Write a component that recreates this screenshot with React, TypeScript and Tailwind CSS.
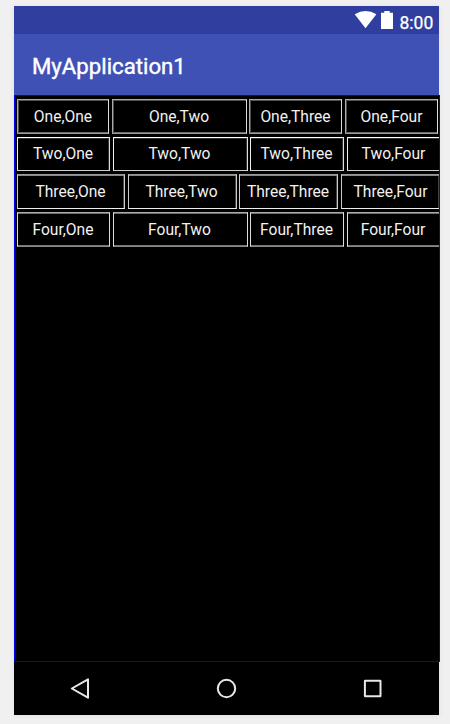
const rows = [
  {
    frame: 'h-[35px]',
    line: 'border-t-[#aaa] border-l-[#aaa] border-r-[#ddd] border-b-[#999] shadow-[inset_1px_1px_0_#505050,inset_0_-1px_0_#707070]',
    cells: [
      ['One,One', 'w-[92px] mr-[3px]'],
      ['One,Two', 'w-[135px] mr-[2px] pr-[1px]'],
      ['One,Three', 'w-[93px] mr-[3px]'],
      ['One,Four', 'w-[93px]'],
    ],
  },
  {
    frame: 'h-[34px] mt-[3px]',
    line: 'border-t-[#fff] border-l-[#eee] border-r-[#ddd] border-b-[#ccc] shadow-[inset_0_1px_0_#333,inset_-1px_0_0_#333]',
    cells: [
      ['Two,One', 'w-[93px] mr-[3px] pr-[1px]'],
      ['Two,Two', 'w-[135px] mr-[2px] pr-[2px]'],
      ['Two,Three', 'w-[94px] mr-[3px] pr-[1px]'],
      ['Two,Four', 'w-[94px] pr-[1px]'],
    ],
  },
  {
    frame: 'h-[35px] mt-[3px]',
    line: 'border-t-[#999] border-l-[#ccc] border-r-[#ccc] border-b-[#eee] shadow-[inset_0_1px_0_#888,inset_-1px_0_0_#444]',
    cells: [
      ['Three,One', 'w-[108px] mr-[3px] pr-[1px]'],
      ['Three,Two', 'w-[109px] mr-[2px] pr-[2px]'],
      ['Three,Three', 'w-[99px] mr-[3px] pr-[1px]'],
      ['Three,Four', 'w-[99px]'],
    ],
  },
  {
    frame: 'h-[35px] mt-[3px]',
    line: 'border-t-[#aaa] border-l-[#ddd] border-r-[#ddd] border-b-[#888] shadow-[inset_0_1px_0_#707070,inset_0_-1px_0_#777]',
    cells: [
      ['Four,One', 'w-[93px] mr-[3px] pr-[1px]'],
      ['Four,Two', 'w-[135px] mr-[2px] pr-[2px]'],
      ['Four,Three', 'w-[94px] mr-[3px] pr-[1px]'],
      ['Four,Four', 'w-[94px] pr-[2px]'],
    ],
  },
];

function StatusBar() {
  return (
    <div className="flex h-[28px] items-start bg-[#303f9f] pl-[340px]">
      <svg className="mt-[4px] h-[19px] w-[24px] shrink-0" viewBox="0 0 24 19" fill="#fff">
        <path d="M.7 4.3Q11.6-2.1 22.4 4.3L11.5 18.2Z" />
      </svg>
      <svg className="ml-[3px] mt-[5px] h-[18px] w-[12px] shrink-0" viewBox="0 0 12 18" fill="#fff">
        <path d="M3.3 0h5.4v1.8H12V18H0V1.8h3.3Z" />
      </svg>
      <span className="ml-[6.5px] mt-[7px] text-[17.5px] leading-[20px] text-white [-webkit-text-stroke:0.25px_#fff]">8:00</span>
    </div>
  );
}

function NavigationBar() {
  return (
    <div className="flex h-[53px] items-center bg-black pl-[55px]">
      <svg width="24" height="24" viewBox="0 0 24 24" fill="none" stroke="#e8e8e8" strokeWidth="2" strokeLinejoin="round">
        <path d="M2.8 11.5 19 2.3v18.4Z" />
      </svg>
      <svg className="ml-[122px]" width="24" height="24" viewBox="0 0 24 24" fill="none" stroke="#e8e8e8" strokeWidth="2">
        <circle cx="11.5" cy="11.5" r="8.7" />
      </svg>
      <svg className="ml-[122px]" width="24" height="24" viewBox="0 0 24 24" fill="none" stroke="#e8e8e8" strokeWidth="2">
        <rect x="3.9" y="3.7" width="15.6" height="15.6" rx=".4" />
      </svg>
    </div>
  );
}

export default function App() {
  return (
    <div className="h-[724px] w-[450px] overflow-hidden bg-[#f0f0f0] pl-[14px] pt-[6px] font-['Roboto',sans-serif]">
      <div className="h-[709px] w-[425px] shadow-[0_1px_5px_rgba(120,100,110,0.12)]">
        <StatusBar />
        <div className="flex h-[61px] items-center bg-[#3f51b5] pl-[18px] pt-[3px]">
          <h1 className="text-[22.2px] leading-[28px] text-white [-webkit-text-stroke:0.4px_#fff]">MyApplication1</h1>
        </div>
        <main className="h-[567px] w-[426px] overflow-hidden border border-[#0000f0] bg-black pl-[2px] pt-[3px]">
          {rows.map((row) => (
            <div key={row.cells[0][0]} className={`flex ${row.frame}`}>
              {row.cells.map(([label, size]) => (
                <div
                  key={label}
                  className={`flex shrink-0 items-center justify-center border text-[15.6px] leading-[20px] text-[#f2f2f2] ${row.line} ${size}`}
                >
                  {label}
                </div>
              ))}
            </div>
          ))}
        </main>
        <NavigationBar />
      </div>
    </div>
  );
}
